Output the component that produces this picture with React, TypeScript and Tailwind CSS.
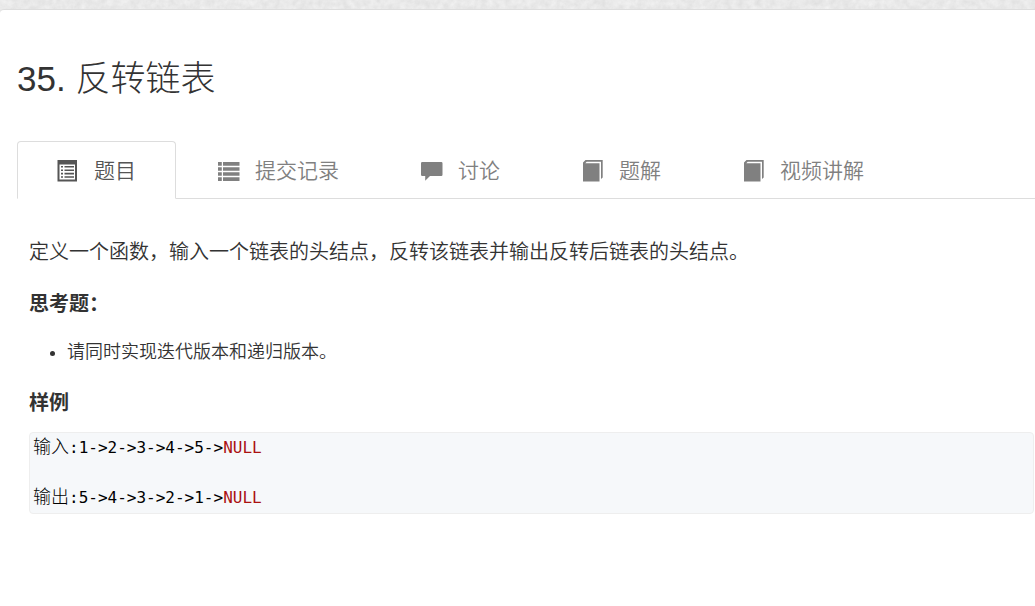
import type { ReactNode } from "react";

function ListAltIcon() {
  return (
    <svg width="22" height="22" viewBox="0 0 22 22" fill="currentColor" aria-hidden="true">
      <path fillRule="evenodd" d="M.5 0h19.5v21.5H.5zM2.5 4.5v15H18v-15z" />
      <path d="M4 6h2v1.600H4zM7.500 6H17v1.600H7.500zM4 9.400h2V11H4zM7.500 9.400H17V11H7.500zM4 12.800h2v1.600H4zM7.500 12.800H17v1.600H7.500zM4 16.200h2v1.600H4zM7.500 16.200H17v1.600H7.500z" />
    </svg>
  );
}

function ListIcon() {
  return (
    <svg width="22" height="22" viewBox="0 0 22 22" fill="currentColor" aria-hidden="true">
      <path d="M0 2h3.800v3.800H0zM5 2H21.500v3.800H5zM0 7.300h3.800v3.500H0zM5 7.300H21.500v3.500H5zM0 12.300h3.800v3.500H0zM5 12.300H21.500v3.500H5zM0 17.300h3.800V21H0zM5 17.300H21.500V21H5z" />
    </svg>
  );
}

function CommentIcon() {
  return (
    <svg width="22" height="22" viewBox="0 0 22 22" fill="currentColor" aria-hidden="true">
      <path d="M1.200 2h19.100Q21.500 2 21.500 3.200v11.600q0 1.200-1.200 1.200H9l-4.800 4.800V16h-3Q0 16 0 14.800V3.200Q0 2 1.200 2z" />
    </svg>
  );
}

function BookIcon() {
  return (
    <svg width="22" height="22" viewBox="0 0 22 22" fill="currentColor" aria-hidden="true">
      <path d="M3.500 0h17.200v17.500L19 19V1.800H4.700L3.300 3.200H17.500V21.500H1V2.500z" />
    </svg>
  );
}

const tabs: { label: string; href: string; icon: ReactNode }[] = [
  { label: "题目", href: "#problem", icon: <ListAltIcon /> },
  { label: "提交记录", href: "#submissions", icon: <ListIcon /> },
  { label: "讨论", href: "#discussion", icon: <CommentIcon /> },
  { label: "题解", href: "#solutions", icon: <BookIcon /> },
  { label: "视频讲解", href: "#videos", icon: <BookIcon /> },
];

function PaperTexture() {
  return (
    <svg className="block h-4 w-full" aria-hidden="true">
      <filter id="paper" x="0" y="0" width="100%" height="100%" colorInterpolationFilters="sRGB">
        <feTurbulence type="fractalNoise" baseFrequency="0.16" numOctaves="4" seed="8" />
        <feColorMatrix values="0.09 0 0 0 0.868  0.09 0 0 0 0.868  0.09 0 0 0 0.868  0 0 0 0 1" />
      </filter>
      <rect width="100%" height="100%" filter="url(#paper)" />
    </svg>
  );
}

function Sample({ label, values }: { label: string; values: string }) {
  return (
    <>
      <span className="text-lg leading-none font-light">{label}</span>
      {values}
      <span className="text-[#aa1111]">NULL</span>
    </>
  );
}

export default function App() {
  return (
    <div className="min-h-screen bg-white font-['Liberation_Sans','Noto_Sans_CJK_SC',sans-serif] text-[#333]">
      <PaperTexture />
      <main className="relative -mt-[7px] rounded-tl-sm border-t border-[#ddd] bg-white pt-12">
        <h1 className="px-[17px] text-[35px] leading-[42px] font-light">35. 反转链表</h1>

        <nav className="mt-[41px] ml-[17px] flex border-b border-[#ddd]">
          {tabs.map((tab, i) => (
            <a
              key={tab.label}
              href={tab.href}
              aria-current={i === 0 ? "page" : undefined}
              className={
                "-mb-px mr-0.5 flex h-[58px] items-center gap-[15px] rounded-t border px-[39px] pt-px text-[21px] leading-8 font-[350] whitespace-nowrap " +
                (i === 0 ? "border-[#ddd] border-b-white bg-white text-[#555]" : "border-transparent text-[#808080]")
              }
            >
              {tab.icon}
              {tab.label}
            </a>
          ))}
        </nav>

        <article className="pt-[37px] pr-px pl-[29px]">
          <p className="text-xl leading-8 font-[350]">
            定义一个函数，输入一个链表的头结点，反转该链表并输出反转后链表的头结点。
          </p>
          <h2 className="mt-5 text-xl leading-8 font-bold">思考题：</h2>
          <ul className="mt-4 list-disc pl-[38px] text-lg leading-8 font-[350]">
            <li>请同时实现迭代版本和递归版本。</li>
          </ul>
          <h2 className="mt-[19px] text-xl leading-8 font-bold">样例</h2>
          <pre className="mt-[13px] rounded border border-[#eee] bg-[#f6f8fa] px-[3px] pt-0.5 pb-[3px] font-['DejaVu_Sans_Mono','Noto_Sans_CJK_SC',monospace] text-base leading-[25px] text-black">
            <code className="font-[inherit]">
              <Sample label="输入" values=":1->2->3->4->5->" />
              {"\n\n"}
              <Sample label="输出" values=":5->4->3->2->1->" />
            </code>
          </pre>
        </article>
      </main>
    </div>
  );
}
